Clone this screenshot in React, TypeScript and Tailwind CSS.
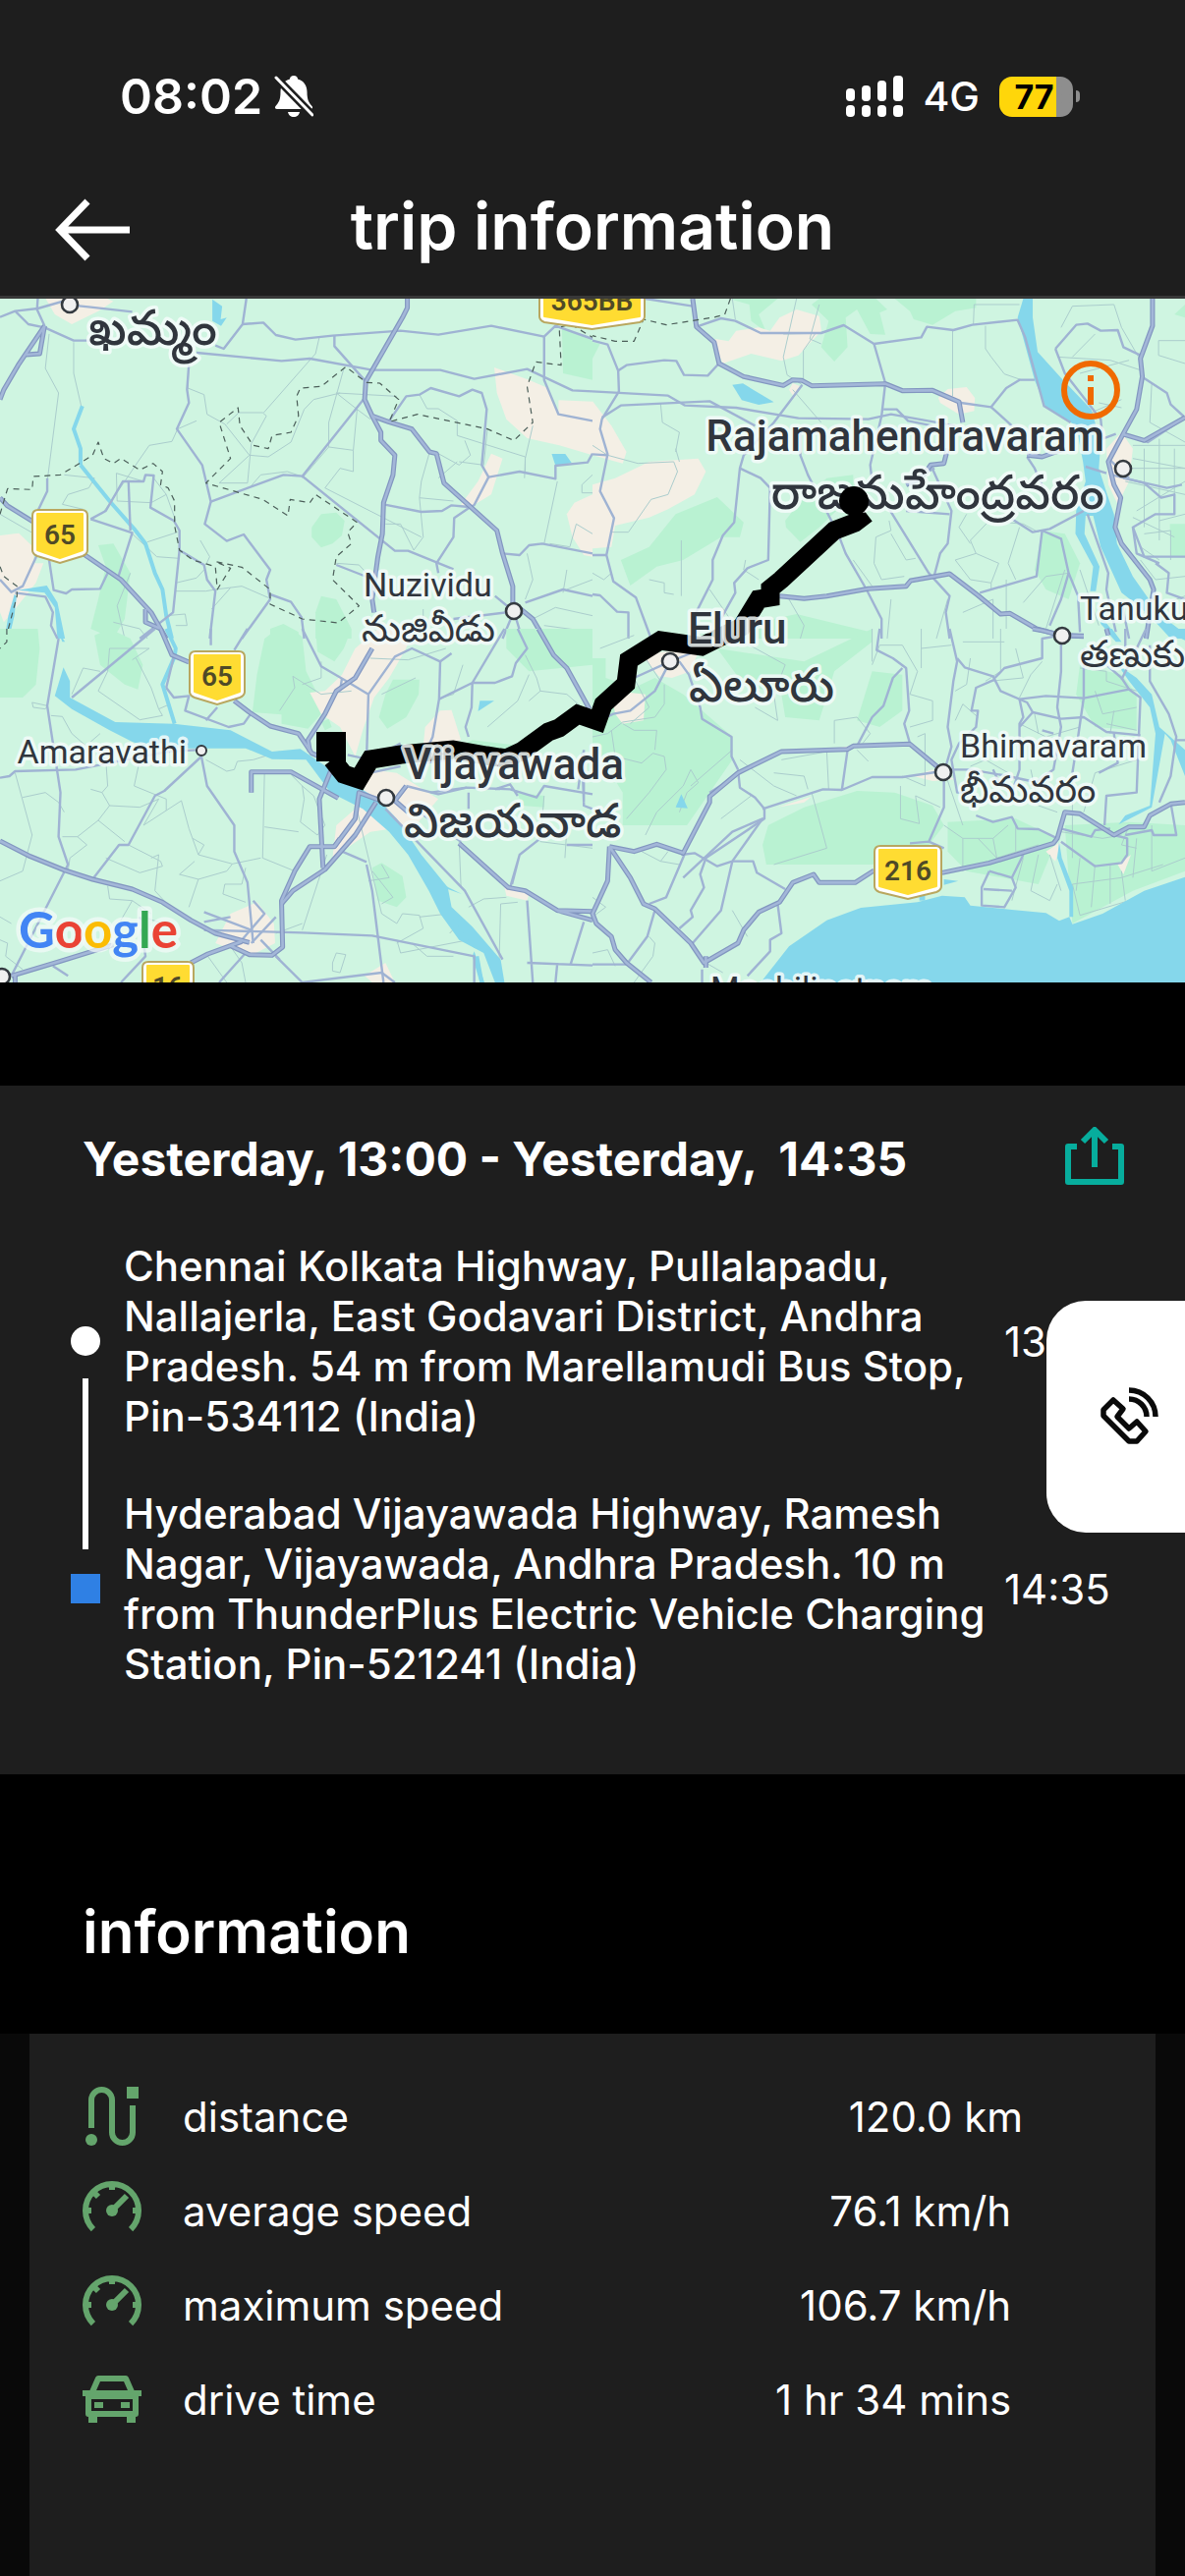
import type { ReactNode } from "react";

type TileProps = {
    x: number;
    y: number;
    green?: string[];
    urban?: string[];
    water?: string[];
    streams?: string[];
    lanes?: string[];
    roads?: string[];
    highways?: string[];
    borders?: string[];
};

type LabelProps = {
    x: number;
    y: number;
    size?: number;
    bold?: boolean;
    end?: boolean;
    children: ReactNode;
};

type ShieldProps = {
    x: number;
    y: number;
    width: number;
    children: ReactNode;
};

type Stop = {
    address: string;
    time: string;
};

type Stat = {
    label: string;
    value: string;
    icon: ReactNode;
};

// One quarter of the map, drawn on its own 1568 x 1080 grid
const Tile = (props: TileProps) => {
    const { x, y, green = [], urban = [], water = [], streams = [], lanes = [], roads = [], highways = [], borders = [] } = props;

    return (
        <g transform={`translate(${x} ${y}) scale(0.38457 0.33333)`} fill="none" strokeLinejoin="round">
            {green.map((d) => <path key={d} d={`M${d}Z`} fill="#b9f2d2" />)}
            {urban.map((d) => <path key={d} d={`M${d}Z`} fill="#f4efe5" />)}
            {lanes.map((d) => (
                <path key={d} d={`M${d}`} stroke="#abcdcd" strokeWidth={1} vectorEffect="non-scaling-stroke" />
            ))}
            {water.map((d) => <path key={d} d={`M${d}Z`} fill="#85d7eb" />)}
            {streams.map((d) => (
                <path key={d} d={`M${d}`} stroke="#85d7eb" strokeWidth={4} vectorEffect="non-scaling-stroke" />
            ))}
            {roads.map((d) => (
                <path key={d} d={`M${d}`} stroke="#9fb3d3" strokeWidth={2.4} vectorEffect="non-scaling-stroke" />
            ))}
            {highways.map((d) => (
                <path key={d} d={`M${d}`} stroke="#8296c0" strokeWidth={5} vectorEffect="non-scaling-stroke" />
            ))}
            {highways.map((d) => (
                <path key={d} d={`M${d}`} stroke="#a3b7d8" strokeWidth={2.6} vectorEffect="non-scaling-stroke" />
            ))}
            {borders.map((d) => (
                <path key={d} d={`M${d}`} stroke="#4c5f5a" strokeWidth={1.2} strokeDasharray="6 5" vectorEffect="non-scaling-stroke" />
            ))}
        </g>
    );
};

const Label = ({ x, y, size = 34, bold, end, children }: LabelProps) => (
    <text
        x={x}
        y={y}
        textAnchor={end ? "end" : "start"}
        fontSize={size}
        fontWeight={bold ? 500 : 400}
        fill="#30353d"
        stroke="#f4fbfa"
        strokeOpacity={0.85}
        strokeWidth={7}
        strokeLinejoin="round"
        paintOrder="stroke"
    >
        {children}
    </text>
);

const Shield = ({ x, y, width, children }: ShieldProps) => (
    <g transform={`translate(${x} ${y})`}>
        <path
            d={`M7 1H${width - 7}Q${width - 1} 1 ${width - 1} 7V42Q${width - 1} 46 ${width - 6} 48L${width / 2} 55L6 48Q1 46 1 42V7Q1 1 7 1Z`}
            fill="#fff"
            stroke="#b9a75f"
            strokeWidth={2}
        />
        <path d={`M6 5H${width - 6}V42L${width / 2} 50L6 42Z`} fill="#ffdc32" stroke="#ffdc32" strokeWidth={2} strokeLinejoin="round" />
        <text x={width / 2} y={36} textAnchor="middle" fontSize={28} fontWeight={600} fill="#4f4a27">
            {children}
        </text>
    </g>
);

const towns = [
    [71, 310], [523, 622], [1143, 477], [682, 673], [1081, 647], [960, 786], [393, 812], [2, 994],
];

const TripMap = () => (
    <svg
        className="block h-[696px] w-full bg-[#cff5e1] font-[Roboto,'Noto_Sans_Telugu','Noto_Sans',sans-serif]"
        viewBox="0 304 1206 696"
        preserveAspectRatio="xMidYMid slice"
        role="img"
        aria-label="Trip route map"
    >
        <Tile
            x={0}
            y={290}
            green={[
                "1487 130L1568 170V290L1490 270", "850 950L890 960L930 1050V1080H835V1000", "715 1080V1050L750 1035L790 1060V1080",
                "850 700L890 695L912 720L905 765L880 790L850 802L825 770V740", "260 795L300 790L345 880L330 1020L300 1080L240 1050L260 960L280 860",
            ]}
            urban={[
                "110 20H240L300 50L260 80L190 120L145 90", "0 765L50 758L88 800L90 850L115 850L95 910L40 990L10 1030L0 1000",
                "1308 252L1400 290L1450 315L1478 400V352L1568 356V520L1480 490L1395 468L1340 410L1315 330",
                "1300 515L1330 530L1300 640L1240 682L1220 670L1265 600", "1568 640L1520 665L1500 700L1515 770L1545 825L1568 830",
            ]}
            water={["562 44L588 65L584 105L600 100L585 125L562 110", "1460 516H1496L1513 544L1470 552", "46 932L124 918L152 970L172 1080H152L145 985L118 940", "44 950L38 1010L24 1080H12L22 1010L38 945"]}
            streams={["213 550L290 660L355 745L385 790L410 880L430 930L440 1010L455 1080", "213 550V500L195 440L218 370"]}
            lanes={[
                "130 150L120 255L155 330L125 600", "195 175V270L215 370", "500 240L497 315L540 335L548 395L595 425L660 520L580 605H655L665 485L705 400L695 390H632L600 425",
                "845 160L835 210L698 390", "910 255L870 420V495L935 505L945 380L890 330L1050 340", "945 380L980 410", "520 415L470 440L455 478L395 490L365 540L330 600L270 700",
                "870 495L800 590", "935 505V570L900 560L860 620L1115 770", "1110 335L1130 378H1160L1210 415V460L1390 525L1388 590",
                "1137 510L1115 600L1110 650L1120 770L1095 810L1060 730H1020", "1230 475L1245 520L1215 550L1160 515", "1215 540L1280 550L1290 440", "1410 430L1390 530V570",
                "1110 650L1200 660", "1160 590L1210 540", "1475 600L1440 790", "1568 580L1540 610V635H1568", "1568 760L1525 730L1508 800L1455 790",
                "1395 820L1410 900L1390 960", "1500 870L1490 940", "1568 900L1500 930", "1410 1020L1470 985L1568 1010", "1440 1040L1568 1060",
                "180 640L165 670L220 685M180 640L235 620L250 590L170 580", "400 580L440 640L400 665L310 660L308 575L380 600", "440 640L465 720",
                "350 760L415 830L475 835M390 785L470 755", "120 780L0 700", "530 780L555 830L545 855", "465 910L520 895L540 870M465 935H545L570 930L640 920L710 955",
                "610 925L560 990", "345 880L310 980L330 1080", "440 1010L490 1005L495 1040L465 1040", "390 1080L370 1050L300 1030", "660 620L690 580L760 570L800 585",
                "1120 990V1080", "660 520L710 525L770 480L805 380L830 350L900 330", "890 850L950 855L970 880",
            ]}
            roads={[
                "0 98L40 80L100 72L190 42", "40 80L75 120L118 130L195 170H240", "190 62L240 68L350 82", "100 42L98 75L118 125",
                "652 42L642 120L592 195L570 185", "642 120L697 115L730 153L782 167L880 155L1060 140L1160 152L1300 125L1440 158L1470 125L1568 165",
                "885 155V187L968 295", "520 207L745 232L820 225L985 260H1165L1255 287L1395 257L1515 322L1568 325",
                "500 240L495 320L500 360L468 440L535 550L558 662L542 730L600 782L645 762L715 870L705 900L715 960L640 1080",
                "558 662L750 580L800 584L965 345", "800 584L1045 812H1080L1200 868", "1440 158V290L1478 395L1568 415",
                "1028 418L1075 340L1110 335L1140 315L1215 340L1250 320L1275 330L1288 380L1275 550L1293 587L1255 672L1240 682L1202 712L1200 770L1155 850L1160 880",
                "1015 670L1115 693L1170 690L1195 673L1240 678", "1293 587L1375 570L1470 592V552L1555 542L1568 515",
                "890 855L990 900", "1330 820L1375 825L1400 795L1435 790L1568 820", "1390 970L1490 930L1568 950", "1360 997L1200 1020", "1360 997L1330 1080M1360 997L1382 1080M1360 997L1310 950",
                "125 590V630L100 690", "100 820L60 920L30 938L0 900", "130 840L142 932L175 942L190 930L265 928L285 880", "40 940L120 952L140 1000L135 1040L152 1080",
                "240 715L280 690L325 600H380L385 580L407 582L398 680L460 720L475 750V810L540 855L548 900L570 935L555 1080",
                "240 715L350 757L312 895", "340 600L345 750", "475 810L458 1000L370 1080", "715 945L770 968L798 1015L805 1080",
            ]}
            highways={[
                "1078 42V70L1065 100L968 295L965 350L985 400L1028 418L1090 440L1137 510L1155 515L1175 605L1315 750L1330 820L1357 920V970L1410 1020L1440 1080",
                "985 400L1008 450V475L1045 520L1040 580L1015 665L1012 760L1000 830L985 960L990 1000", "0 650L20 675L83 720L225 825L320 900L400 1000L420 1040L440 1080",
                "385 990V1030L425 1050", "118 125L48 245L10 320L0 350", "118 125L105 210L70 213",
            ]}
            borders={[
                "0 700L20 622L85 625L88 585L160 580L210 545L245 520L260 480L275 530L300 545L320 530L370 565L405 545L430 570L425 610L445 620L462 660V735L475 810L510 840L570 860L575 930L610 865L570 845L640 862L715 930V975L800 1020L895 1032L950 980L880 900L890 830L930 790L920 755L945 725L835 640L820 665L768 655L762 705L695 655L545 605L610 530L580 420L630 375L635 430L670 490L710 500L720 460L770 450L790 400L785 340L795 315L850 310L915 250L970 298L1005 300L1055 350L1030 418L1105 395L1290 440L1360 475L1410 420L1395 310L1418 235L1485 245L1480 130L1510 120L1568 160",
                "0 860L10 890L45 920V950L15 1080",
            ]}
        />
        <Tile
            x={603}
            y={290}
            green={[
                "370 42H490L440 90L460 145L420 110L415 60L370 45", "600 42H750L780 75L760 85L775 152L735 150L700 75L670 100L675 190L640 234L605 190L625 110L580 60L600 42",
                "800 42H1015V70L960 80L900 122L850 105L840 80", "1568 60L1540 90L1568 100", "75 840L150 800L220 700L330 648L400 725L390 770L340 770L240 840L170 860L100 918",
                "510 720L550 660L620 590L690 580V640L600 740L550 785L512 740", "1190 750L1250 760L1290 850L1260 960L1200 930L1170 870", "0 175L20 180L0 225",
                "400 1040L540 1005L735 1060V1080H400", "1528 730H1568V830H1530",
            ]}
            urban={[
                "325 165L360 172L380 140L440 130L470 140L495 100L540 75L600 95L606 140L545 215L500 232L420 210L345 240L330 200",
                "915 345L940 318L990 312L1012 345L1010 385L970 395L920 360", "0 355L50 430L90 510L80 545L0 520", "0 610L60 590L150 540L280 530L300 570L270 640L200 685L150 710L60 735L50 800L0 805",
                "530 300L550 310L535 345L520 320", "1360 500L1400 450L1430 500L1420 600L1390 670L1365 610",
            ]}
            water={[
                "1140 42H1165V100L1178 205L1245 290L1320 380L1345 480L1340 560L1362 640L1380 700L1388 790L1430 890L1500 1005L1568 1065V1080H1530L1490 1030L1445 980L1400 940L1345 800L1325 705H1305L1302 760L1342 860L1332 935H1317L1325 860L1278 760L1280 690L1305 600L1298 540L1280 430L1200 375L1170 290L1125 100",
                "370 305L398 301L480 358L440 366L395 352", "1345 1010L1392 1080H1380L1345 1035",
            ]}
            lanes={[
                "540 42L505 220L515 275L555 305", "370 42L378 105", "600 60L575 165L605 180", "558 200V290", "505 150L590 148L558 200",
                "953 140V340", "1010 60H1130M1040 125V195L1055 220L1090 272L1135 290", "1010 60L1008 120", "180 360L185 420L230 450L220 510", "530 320L605 420",
                "0 490L40 520L120 545L215 540M215 540L225 570L200 640L155 655L95 755L50 755", "220 500L230 540", "235 780V950", "150 900L190 910V940L215 945",
                "440 900L400 870L405 840", "745 850L765 900L825 890M745 850L750 770L790 750L785 720", "790 760L830 840L855 835", "960 840L1015 820L1000 780L1050 720L1140 730L1180 755",
                "1015 820L1075 850L1055 910L1000 900L960 840", "1055 910V930", "990 700L970 740L1000 790", "1380 60L1400 130L1450 230", "1568 170H1498V215L1568 240",
                "1230 220L1370 230L1450 260", "1270 220L1330 150", "1380 60L1270 65L1240 130", "1420 230L1290 270", "1400 350L1320 390M1340 360L1400 375",
                "1480 300L1475 420L1568 480", "1430 490H1568M1430 530L1568 560M1420 560H1568M1460 500V740M1500 470V780M1540 500V640M1410 600L1568 640M1440 690L1568 600M1430 710L1540 770",
                "1450 800L1500 840M1460 760L1530 750V840M1500 720L1568 700", "980 1000L1060 960V1080", "1095 900V1050", "940 960L910 1080", "690 840L740 920", "790 960L780 1080",
                "1140 970L1200 890L1260 880", "1250 870L1200 1050M1290 870L1340 1040", "1450 840L1490 900L1568 890", "1460 1000L1568 950", "0 880L30 900L50 880",
                "520 960L560 1040L550 1080", "310 930L400 1080", "1130 740L1100 850L1120 900",
            ]}
            roads={[
                "140 42L265 65", "275 128L340 102L378 110L445 147H605L665 123L745 180L870 160L885 128L955 138L1005 122L1125 107L1145 160L1195 370L1265 420",
                "745 180L775 300L765 400L735 550L740 600L890 880L945 950L935 1000L945 1080", "0 170L40 182L68 262L70 325L25 410L20 440L40 517L20 630L57 712L37 825L55 905L115 955L155 1080",
                "68 262L90 245L190 230L222 232L242 275L305 277L332 243", "0 325L200 338L245 368L380 375L545 407L730 410L790 395L960 430", "25 405L75 368L310 355L430 430",
                "555 305L480 420L400 520L390 560L375 725L345 765L318 840V900L270 1010", "390 560L445 590L470 620L465 840L410 865L375 910L378 940L330 1040",
                "550 440V520L570 580L650 760L670 820L725 930L765 1020V1080", "975 360L1055 373L1095 315L1130 290H1170", "770 380H805L835 415L900 430",
                "1055 373L1110 430", "1225 195L1280 122L1310 118L1345 140L1390 138L1405 190L1450 215", "1225 195L1250 270L1345 410L1350 470L1385 455",
                "1460 285L1520 330L1530 365L1568 405L1470 480L1405 455", "1375 580L1460 605L1505 650L1540 640V700H1490L1430 740L1460 830H1568", "1430 740L1440 820L1500 850",
                "1405 590L1520 620L1560 610", "895 550L950 690L940 790L920 820L905 885", "1110 715L1165 755L1210 745L1300 690", "1190 750L1175 890L1025 940",
                "1190 750L1240 775L1260 880L1240 960L1210 1040", "1310 700L1365 880L1360 930L1385 1060", "1260 880L1285 950L1290 1060", "0 945L20 948L65 998L95 1000V1080",
                "0 517L40 520M0 825H37", "1150 525L1170 560L1200 640", "830 690L945 700M905 560L870 580M1305 555L1360 575M1490 850L1525 880L1520 940L1568 960M1400 970L1420 1080M1365 530L1420 590",
            ]}
            highways={[
                "265 42L275 128L322 175L335 240L400 280L505 307L530 290L555 292L580 308L775 302L820 323L900 322L970 357L980 420",
                "495 950L560 958L620 950L730 928L830 920L842 903L945 882L1020 948L1080 1005L1105 1003L1175 1050L1240 1070L1300 1073",
                "1482 42V125L1450 225L1455 280L1440 380L1402 460L1365 540L1380 610L1398 650L1383 740L1400 790L1475 900L1485 930L1465 1080",
                "1402 455L1460 475L1568 405", "940 500L930 545L895 550L870 590L830 610", "1150 520L1190 525L1250 500",
            ]}
            borders={["365 42L350 90L325 98L195 122L135 105L110 172H60L0 155"]}
        />
        <Tile
            x={0}
            y={640}
            green={[
                "0 0H100L105 60L95 170L60 210H0", "250 20L290 0L345 30L378 110L365 185L330 170L265 110", "700 30L735 0H770L800 25L810 130L845 210L850 260L815 305L745 290L745 262L668 255L680 140",
                "835 0H930L910 60L885 100L840 70", "1040 155L1110 155L1108 200L1075 270L1025 305L1003 270L1020 200", "985 730L1010 715L1065 755L1075 820L1050 850L1000 830",
                "850 285L870 275L878 300L860 310", "870 490L920 490L915 495L880 470", "1340 0H1568V110L1400 130L1340 60",
                "1370 500L1440 510V545L1380 540", "1130 400L1250 340L1400 360L1330 420",
            ]}
            urban={[
                "940 60L1000 0H1100L1070 70L1030 150L990 210L960 310L940 390L900 300L850 260L820 195L860 190L905 140", "1125 300L1165 250L1195 248L1220 340L1140 370L1120 360",
                "610 870L680 835L725 900L728 960L660 1000L570 960", "980 430L1050 440L1160 520L1100 600L980 620L880 700L890 600L950 540", "965 1060L1020 1020L1045 1080H985",
                "1335 790L1400 810L1395 830L1340 815",
            ]}
            water={[
                "168 118L185 160V210L305 285L460 290L610 310L720 375L795 367L900 450L1000 520L1050 580L1115 690L1185 790L1195 850L1250 910L1325 1010L1335 1080H1310L1280 990L1215 950L1165 870L1135 800L1080 690L1030 620L960 550L875 500L810 400L720 398L650 365H400L350 345L290 310L190 245L145 205",
                "1170 780L1222 810L1185 795", "1190 870L1255 975L1300 980L1200 860", "1255 985L1282 1080H1270L1250 1000", "1270 220H1308L1265 252", "150 0L172 40H165",
            ]}
            streams={["440 0L465 60L462 85L430 170L462 290", "1262 1000L1275 1080"]}
            lanes={[
                "290 60H395L350 95M290 60L285 130L260 190L370 278L430 265L420 245L400 180L360 90", "190 200L220 120L265 130", "85 225L125 235L120 245L88 240Z", "135 265L165 268L190 320L240 370",
                "40 440L85 630L60 740L0 770", "60 515L120 500L155 530L170 560", "235 350L280 400L285 480L270 500L290 540L370 545L420 520L380 600L440 555V520L355 480L370 400",
                "450 230L420 245M265 320L240 345", "240 490L270 500M165 635H205L260 585L290 540", "205 635L230 660L185 700L180 740", "260 585L330 650M280 700L370 745L430 725L425 710L340 660",
                "440 555L480 525L500 610L525 690L615 718L690 700", "510 640L540 660L525 690M515 710L475 750L525 765L500 850M525 765L600 740L615 718", "400 700L420 690L410 800L450 850",
                "285 785L290 825L350 830L400 870M350 830L320 890", "545 400L600 435L620 430L628 405L670 400L740 375", "700 440L695 700L780 740L740 840", "770 445L800 480L805 520L795 590L840 630L860 600L830 510L800 480", "700 605L790 620",
                "650 730L640 780L595 780L590 810L650 835", "865 690L800 920", "930 480L1010 870L1050 900L1065 870L1110 875L1120 915L1050 960", "1040 610L1215 900L1190 930", "985 740L1040 820L1010 840",
                "975 770L1030 760L1010 720", "1215 650L1220 790M1340 820L1280 825L1240 850", "1325 840L1320 1060M1325 840L1370 835", "775 145L850 200L930 190M775 145L780 180L740 250M850 100V150L800 170",
                "1225 110L1200 200L1170 210M1390 80L1420 150L1430 190L1500 200L1540 240M1430 190L1400 220M1400 140L1370 220L1290 300", "980 90L1080 95L1180 60", "1010 200L1100 150",
                "890 990L915 995L900 1050L880 1045V1020L890 990", "610 970L640 1020L650 1080M550 1000L600 1080", "430 900L380 880L370 850", "0 950L20 960L15 1000L60 1040", "30 900L0 880", "730 930L800 900",
                "1440 510L1430 650L1568 670", "1568 600L1500 610L1495 700", "1050 950L1060 990L1240 950M1110 880L1190 870M1090 960L1130 1000L1200 1000",
            ]}
            roads={[
                "155 30L125 235L160 500L155 635L180 720L30 1060", "410 0L190 210", "655 0L620 65M558 0V50", "440 180L460 210L500 205L490 250L605 300L645 290L662 262",
                "575 240L545 280M460 85L440 180", "533 390L435 495L410 510L340 660H315L245 765", "533 390L548 480L620 600V680L655 775L670 960", "0 455L25 450L40 435L200 430L445 375L520 370",
                "800 0L850 115L910 155L975 200L970 400M905 150L900 190M975 200L1045 85L1090 60L1165 100L1162 215L1145 330L1125 380",
                "1165 100L1195 75M1162 215L1250 165L1310 165L1355 145L1365 105L1395 60L1370 0M1250 165L1335 0M1250 165L1248 240L1232 300L1240 330",
                "540 920L800 928L985 937L1255 1000V1080M730 1000L800 1080M800 1080L1010 1050L1045 1080", "970 720L985 800L1015 1080M905 680L970 712", "650 990L580 1080M690 950L740 1010",
                "1120 410L1300 390M1075 480L1160 505L1235 485L1350 490L1420 515L1440 480L1568 505M1310 490L1350 475L1370 510M1240 500V550",
                "1105 410L1120 460M1235 485L1140 500M1020 550L1230 800L1330 1010", "1110 560L1220 650M1375 690L1350 790M1430 640L1375 690L1355 780M1395 830L1410 1080M1395 1020L1568 1028M1475 1020L1470 1080M1545 895L1510 1025M1500 660H1568",
                "640 950L700 870L670 830M540 865L665 920M665 960L730 880", "180 1060L140 1030M370 880L385 1000L320 1080M540 895L610 880",
                "1530 490L1545 370M1545 530L1540 380M1568 550L1545 540V370", "920 385L980 400L1060 350M980 440L1060 420",
            ]}
            highways={[
                "425 0L455 80L500 102M620 220L660 255L715 297L790 320L825 380L855 395", "985 60L940 150L890 190L860 260L815 340L820 375", "665 500V437H770L895 517",
                "0 648L80 695L170 737L245 765L350 795L430 835L505 890L570 930L660 958", "505 1020L550 993L640 955M610 968L660 995L720 997L748 972L745 830L780 740L820 665H885L940 580L950 500L1020 530",
                "880 420L845 520L855 730M745 840L775 800L860 735L940 630L995 530M885 665L900 640", "30 1060L160 1015L300 965", "40 1080V1055", "1425 0L1465 80L1500 120L1560 245",
                "1215 655L1345 790L1390 800L1475 860L1568 890M1475 860L1568 863", "1075 480L1045 525L1080 560",
            ]}
            borders={["18 0V40L0 60"]}
        />
        <Tile
            x={603}
            y={640}
            green={[
                "0 90H35V150L110 180L165 150L240 200L280 240L370 330V400L310 500L250 600L80 600V500L0 350", "330 60L560 100L740 0L740 40L640 130L600 280L510 270L500 200L400 170",
                "450 660L465 600L560 545L700 495L800 500L900 540L930 600L890 660L740 720H460", "940 590L1120 580L1230 640L1180 780L990 740L940 680", "1250 600L1420 590L1568 600V740L1430 800L1270 900L1260 760",
                "1290 110L1400 140L1440 200V310L1330 300L1280 200", "740 130L820 140V250L760 300L700 280",
            ]}
            urban={["130 80L190 70H280L260 130L210 150L175 145", "55 230L100 195L140 200L135 280L80 290L60 260", "850 450L900 430L960 460L900 465", "640 365L700 355L670 372", "1200 680L1240 650L1225 710", "1390 720L1425 690L1405 750", "490 545L580 512L560 530"]}
            water={[
                "445 1080L520 970L620 890L710 852L860 835L925 815L985 820L1000 845L1110 858L1200 868L1235 892L1262 880L1270 902L1350 870L1460 800L1568 758V1080",
                "1390 110L1440 150L1480 200L1500 300L1568 370V450L1530 340L1515 320L1480 545L1392 598L1410 570L1475 540L1490 320L1475 240L1420 160", "1235 650L1242 700L1272 790V880H1262V800L1230 700",
                "930 765L968 770L930 782", "235 505L252 548L220 545", "1355 0H1375L1400 40H1385", "1510 0H1568V35L1540 20", "865 815H880V830H865",
            ]}
            lanes={[
                "20 60L110 20M110 150L150 240L100 290M190 170V230L165 270L80 285L40 320L0 330", "80 290L110 310H170L165 370M50 310L60 390L130 410L160 380L190 390L195 430L150 500L90 580", "260 430L240 480L170 560L140 630",
                "260 430L280 470L250 500L230 560", "420 510L340 580M390 400L480 480L540 510M480 440L560 450L570 490M500 400L620 375L625 490", "370 370L260 480",
                "580 500L620 670L480 720", "640 350V280L700 270L735 320L715 350M700 370L730 405", "815 480V580L865 595L855 510L920 545", "740 110L760 50H820L860 130L840 200L900 220V280L840 300",
                "740 100V0M870 0V120M870 60L950 50M980 40H1090M1080 0V130L1040 160M1120 60L1140 150L1050 160M1190 100L1160 140L1130 210", "1020 270L980 230L960 280M1130 290L1200 330L1290 300M1170 260L1180 320",
                "1290 120L1360 130V160L1440 190M1330 190L1350 260L1440 240M1380 250L1370 320M1360 290L1440 310", "1000 90L990 170L960 190", "1270 430V700M1330 440L1300 560M1440 400L1330 440",
                "930 600L980 640L1060 640L1100 600M980 640V740M1020 640L1070 700L1180 660M1060 640L1070 700L1050 720M1120 600V680", "1140 700L1110 830M1180 690L1160 800L1210 830L1230 780M1210 690L1240 800",
                "1270 780L1290 875L1420 830L1568 770M1290 700L1280 800M1330 720L1320 850M1370 720V840M1400 740L1410 830M1270 780L1400 760L1510 720M1440 640L1430 760M1480 600V740L1568 700",
                "1420 600L1400 660L1440 670M1240 620L1350 640L1400 630M1000 420L1040 400L1100 440M1160 430L1180 540L1230 560", "0 820L35 850L0 880M150 940L165 960L160 1000L110 1080M370 860L410 940",
                "0 990L40 980L60 1030M300 1020L345 1050", "130 680L180 710L200 680M180 710L230 720", "400 40L510 110L480 200L490 280L430 240M140 90L180 160", "860 330L880 320V480L820 450M930 430L980 600",
            ]}
            roads={[
                "0 290L55 260L100 250L165 190L205 100M205 100L110 150M230 100L255 140L285 240L290 275L368 330V390L385 430", "205 100L260 75",
                "760 0L752 65L795 90L830 120L838 250L825 290L840 350M820 120L795 150L770 235L740 270L700 358", "945 0L965 100L955 160L940 300L950 360L930 440", "965 90L985 118L1060 145L1080 190L1150 225L1165 255L1240 275L1300 270L1360 315L1450 325",
                "1065 155L1015 180L1003 250H1020L1015 300L970 350L950 400L965 500L1000 500", "1065 150L1090 120L1190 90V30L1240 20M1130 215L1200 205L1300 212L1420 185L1400 150L1360 110M1130 215L1140 270L1130 290V430L1110 500M1165 255L1130 300",
                "1240 30V130L1230 240L1240 300L1220 430L1160 480M1300 60V210L1285 330L1270 440M1410 0V60M1400 155L1465 0M1475 50V160L1525 260L1545 330L1530 450L1500 530",
                "1420 185L1450 210L1445 350L1440 500L1360 510L1355 600", "385 430L390 485L430 515L455 550L455 580L300 700L285 750L295 790L260 860L265 880L230 915",
                "380 450L310 500", "450 550L610 490L660 492L740 453H820L925 435M675 370L660 492", "930 460V545L890 650L930 670M840 655L890 650", "370 710H425L435 745L510 795M370 710L340 860L265 960M245 685L195 820L150 840",
                "235 690L270 685L330 725L370 710L450 580L370 620L240 760", "950 430L1000 430L1100 450L1160 465M1015 570L1060 590L1110 575L1125 610L1180 612L1230 640M1240 650L1330 725L1400 715L1415 690V640L1380 630M1410 630L1480 615L1485 630H1545L1530 530",
                "1050 740L1110 760L1140 690M1110 760L1120 790L1090 850L1030 845V790L1050 740M1035 795L1110 800M1240 610L1320 635L1330 615L1370 610", "165 860L145 940L90 1025H0M490 840L500 930L470 950V985L410 1060M290 1040V1080M1060 430L1080 480",
                "1190 310L1220 320M1380 320L1390 410L1340 440M1568 340H1545",
            ]}
            highways={[
                "45 665L110 680L170 658L240 685L310 530V512L385 440L500 375L675 368L690 358L840 352L930 438", "45 665L100 760L135 840L165 855L260 960L295 1020L385 960L400 920L440 865L495 835L530 775L585 750L600 775H695L745 738",
                "45 665L40 770L0 870L10 900L50 940L60 980L90 1020L155 1080", "925 745L1050 715L1220 655L1230 640L1250 560L1290 565L1380 630L1420 605H1460L1475 570L1530 535L1568 530",
                "300 1000V1035", "1165 0L1190 5L1240 20L1300 22", "1360 0L1365 20",
            ]}
        />

        <path
            d="M882 523L870 532L849 540L795 590L784 599V608L772 610L764 623L755 638L734 648L714 658L672 652L640 672L637 696L614 717L608 734L588 727L569 741L558 745L532 764L515 772L495 769L461 763L408 768L377 773L365 793L350 788L338 773"
            fill="none"
            stroke="#000"
            strokeWidth={19}
        />

        <Label x={90} y={351} size={50} bold>ఖమ్మం</Label>
        <Label x={370} y={607}>Nuzividu</Label>
        <Label x={504} y={653} size={38} end>నుజివీడు</Label>
        <Label x={1124} y={459} size={44} bold end>Rajamahendravaram</Label>
        <Label x={1124} y={518} size={49} bold end>రాజమహేంద్రవరం</Label>
        <Label x={700} y={655} size={44} bold>Eluru</Label>
        <Label x={701} y={714} size={48} bold>ఏలూరు</Label>
        <Label x={1099} y={631}>Tanuku</Label>
        <Label x={1099} y={679} size={38}>తణుకు</Label>
        <Label x={977} y={771}>Bhimavaram</Label>
        <Label x={977} y={817} size={38}>భీమవరం</Label>
        <Label x={411} y={793} size={44} bold>Vijayawada</Label>
        <Label x={411} y={852} size={48} bold>విజయవాడ</Label>
        <Label x={190} y={777} end>Amaravathi</Label>
        <Label x={723} y={1018}>Machilipatnam</Label>

        {towns.map(([cx, cy]) => (
            <circle key={cx} cx={cx} cy={cy} r={8} fill="#f0f0f0" stroke="#343a40" strokeWidth={2.6} />
        ))}
        <circle cx={205} cy={764} r={5} fill="#f0f0f0" stroke="#343a40" strokeWidth={2} />

        <Shield x={32} y={518} width={58}>65</Shield>
        <Shield x={192} y={662} width={58}>65</Shield>
        <Shield x={144} y={978} width={54}>16</Shield>
        <Shield x={889} y={860} width={70}>216</Shield>
        <Shield x={548} y={280} width={109}>365BB</Shield>

        <circle cx={869} cy={510} r={15} />
        <path d="M322 745H352V775H322Z" />

        <text
            x={19}
            y={965}
            className="font-[Lato,sans-serif]"
            fontSize={51}
            fontWeight={700}
            stroke="#f4fbfa"
            strokeOpacity={0.7}
            strokeWidth={9}
            strokeLinejoin="round"
            paintOrder="stroke"
        >
            <tspan fill="#4285f4">G</tspan>
            <tspan fill="#ea4335">o</tspan>
            <tspan fill="#fbbc04">o</tspan>
            <tspan fill="#4285f4">g</tspan>
            <tspan fill="#34a853">l</tspan>
            <tspan fill="#ea4335">e</tspan>
        </text>
    </svg>
);

const StatusBar = () => (
    <div className="flex h-14 items-center justify-between pr-[107px] pl-[122px]">
        <div className="flex items-center gap-3">
            <span className="text-[50px] leading-none font-semibold">08:02</span>
            <svg className="h-11 w-10" viewBox="0 0 40 44" fill="none" aria-hidden="true">
                <path
                    d="M20 1C22.500 1 24 2.500 24 4.500C30 6 33.500 11 33.500 17.500C33.500 26 35.500 28.500 38.500 32C39.700 33.500 39 35 37 35H3C1 35 .3 33.500 1.500 32C4.500 28.500 6.500 26 6.500 17.500C6.500 11 10 6 16 4.500C16 2.500 17.500 1 20 1ZM14 38H26C25.500 41 23 43 20 43S14.500 41 14 38Z"
                    fill="#fff"
                />
                <path d="M2 3L39 41" stroke="#1e1e1e" strokeWidth={8} />
                <path d="M2 3L39 41" stroke="#fff" strokeWidth={3} strokeLinecap="round" />
            </svg>
        </div>
        <div className="flex items-center gap-5">
            <svg className="h-[42px] w-[58px]" viewBox="0 0 58 42" fill="#fff" aria-hidden="true">
                <rect x="0" y="13" width="9" height="13" rx="4" />
                <rect x="16" y="10" width="9" height="16" rx="4" />
                <rect x="32" y="5" width="9" height="21" rx="4" />
                <rect x="48" y="0" width="10" height="26" rx="4" />
                <rect x="0" y="30" width="9" height="12" rx="4" />
                <rect x="16" y="30" width="9" height="12" rx="4" />
                <rect x="32" y="30" width="9" height="12" rx="4" />
                <rect x="48" y="30" width="10" height="12" rx="4" />
            </svg>
            <span className="text-[41px] leading-none font-medium">4G</span>
            <div className="flex items-center gap-[3px]">
                <div className="flex h-[41px] w-[75px] items-center justify-center rounded-[13px] bg-linear-to-r from-[#ffd60a] from-77% to-[#8e8e8e] to-77% pr-1 text-[34px] font-bold text-black">
                    77
                </div>
                <div className="h-3 w-1 rounded-r-full bg-[#8e8e8e]" />
            </div>
        </div>
    </div>
);

const ShareIcon = () => (
    <svg className="size-[60px]" viewBox="0 0 60 60" fill="none" stroke="#07ad9d" strokeWidth={6} strokeLinejoin="round" aria-hidden="true">
        <path d="M12 20H3V56H57V20H48" />
        <path d="M30 41V4M18 15L30 3L42 15" />
    </svg>
);

const CallIcon = () => (
    <svg className="size-[60px]" viewBox="0 0 60 60" fill="none" stroke="#0a0a0a" strokeWidth={5.5} aria-hidden="true">
        <path d="M13 13L23 22L17 30L29 42L37 35L46 45L37 55H29L3 29V23Z" strokeLinejoin="round" />
        <path d="M29 3A27 27 0 0 1 56 30M29 12A18 18 0 0 1 47 30" />
    </svg>
);

const RouteIcon = () => (
    <svg className="size-[60px]" viewBox="0 0 60 60" fill="#64a56c" aria-hidden="true">
        <path d="M9 42V13.500A10.500 10.500 0 0 1 30 13.500V46.500A10.500 10.500 0 0 0 51 46.500V19" fill="none" stroke="#64a56c" strokeWidth={6} />
        <circle cx="9" cy="54" r="6" />
        <path d="M45 0H57V12H45Z" />
    </svg>
);

const SpeedIcon = () => (
    <svg className="size-[60px]" viewBox="0 0 60 60" fill="none" stroke="#64a56c" strokeWidth={6} aria-hidden="true">
        <path d="M10.900 49.100A27 27 0 1 1 49.100 49.100M30 3V9M3 30H9M57 30H51M11 11L16 16M30 30L45 15" />
        <circle cx="30" cy="30" r="6" fill="#64a56c" stroke="none" />
    </svg>
);

const CarIcon = () => (
    <svg className="size-[60px]" viewBox="0 0 60 60" fill="#64a56c" aria-hidden="true">
        <path d="M9 25L16 9H44L51 25" fill="none" stroke="#64a56c" strokeWidth={6} strokeLinejoin="round" />
        <path d="M0 21H60V27H0ZM6 46H15V54H6ZM45 46H54V54H45ZM12 33H21V39H12ZM39 33H48V39H39Z" />
        <path d="M6 27H54V45H6Z" fill="none" stroke="#64a56c" strokeWidth={6} strokeLinejoin="round" />
    </svg>
);

const stops: Stop[] = [
    {
        address:
            "Chennai Kolkata Highway, Pullalapadu, Nallajerla, East Godavari District, Andhra Pradesh. 54 m from Marellamudi Bus Stop, Pin-534112 (India)",
        time: "13:00",
    },
    {
        address:
            "Hyderabad Vijayawada Highway, Ramesh Nagar, Vijayawada, Andhra Pradesh. 10 m from ThunderPlus Electric Vehicle Charging Station, Pin-521241 (India)",
        time: "14:35",
    },
];

const stats: Stat[] = [
    { label: "distance", value: "120.0 km", icon: <RouteIcon /> },
    { label: "average speed", value: "76.1 km/h\u00a0", icon: <SpeedIcon /> },
    { label: "maximum speed", value: "106.7 km/h\u00a0", icon: <SpeedIcon /> },
    { label: "drive time", value: "1 hr 34 mins\u00a0", icon: <CarIcon /> },
];

const App = () => {
    return (
        <div className="flex min-h-screen flex-col bg-black font-[Inter,sans-serif] text-white">
            <header className="border-b-3 border-[#383838] bg-[#1e1e1e] pt-[70px] pb-[11px]">
                <StatusBar />
                <div className="mt-11 grid h-[120px] grid-cols-[1fr_auto_1fr] items-center px-14">
                    <button type="button" aria-label="Back" className="w-fit">
                        <svg className="size-[76px]" viewBox="0 0 76 76" fill="none" stroke="#fff" strokeWidth={7} aria-hidden="true">
                            <path d="M76 42H6M33 13L5 42L33 71" />
                        </svg>
                    </button>
                    <h1 className="text-[66px] leading-none font-semibold">trip information</h1>
                </div>
            </header>

            <div className="relative">
                <TripMap />
                <button type="button" aria-label="Map info" className="absolute top-[63px] right-[66px]">
                    <svg className="size-[60px]" viewBox="0 0 60 60" aria-hidden="true">
                        <circle cx="30" cy="30" r="27" fill="none" stroke="#f06a00" strokeWidth={6} />
                        <path d="M27 15H33V21H27ZM27 27H33V45H27Z" fill="#f06a00" />
                    </svg>
                </button>
            </div>

            <section className="relative mt-[105px] bg-[#1e1e1e] pt-[42px] pb-[87px]">
                <div className="flex items-start justify-between pr-[62px] pl-[84px]">
                    <h2 className="text-[48px] leading-[66px] font-bold whitespace-pre">Yesterday, 13:00 - Yesterday,  14:35</h2>
                    <button type="button" aria-label="Share trip">
                        <ShareIcon />
                    </button>
                </div>

                <ol className="mt-[50px] flex flex-col gap-12 pr-[70px] pl-[72px]">
                    {stops.map((stop, i) => (
                        <li key={stop.time} className="relative flex items-center">
                            {i === 0 ? (
                                <>
                                    <span className="size-[30px] shrink-0 rounded-full bg-white" />
                                    <span className="absolute top-[140px] left-3 h-[174px] w-1.5 bg-white" />
                                </>
                            ) : (
                                <span className="size-[30px] shrink-0 bg-[#2f80e4]" />
                            )}
                            <p className="flex-1 pl-6 text-[42px] leading-[51px] font-medium">{stop.address}</p>
                            <time className="w-[114px] text-[42px]">{stop.time}</time>
                        </li>
                    ))}
                </ol>

                <button
                    type="button"
                    aria-label="Call support"
                    className="absolute top-[219px] right-0 flex h-[236px] w-[141px] items-center rounded-l-[40px] bg-white pl-[55px]"
                >
                    <CallIcon />
                </button>
            </section>

            <h2 className="px-[84px] pt-[124px] pb-[68px] text-[60px] leading-[72px] font-semibold">information</h2>

            <section className="flex flex-1 flex-col bg-[#090909] px-[30px]">
                <dl className="flex-1 bg-[#1e1e1e] pt-9 pr-[135px] pb-32 pl-[54px] text-[42px]">
                    {stats.map((stat) => (
                        <div key={stat.label} className="flex h-24 items-center">
                            {stat.icon}
                            <dt className="flex-1 pl-[42px]">{stat.label}</dt>
                            <dd>{stat.value}</dd>
                        </div>
                    ))}
                </dl>
            </section>
        </div>
    );
};

export default App;
